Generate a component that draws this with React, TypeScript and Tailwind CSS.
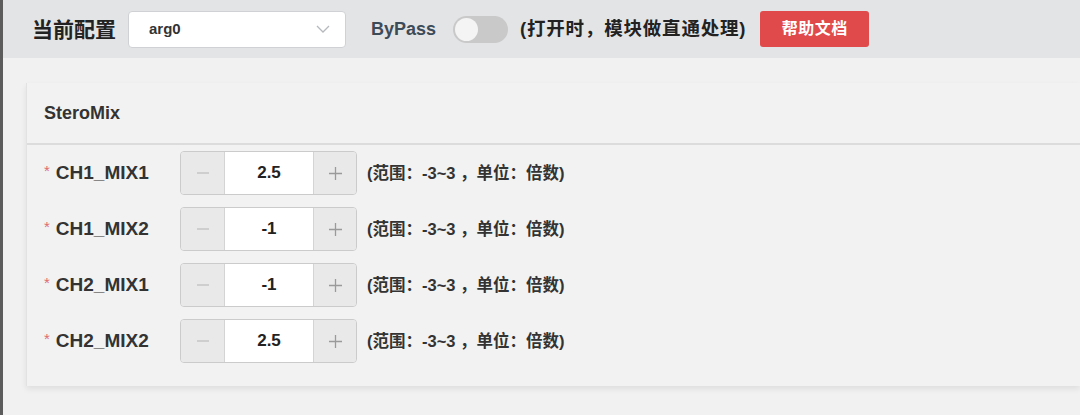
import React from "react";

const rows = [
  { name: "CH1_MIX1", value: "2.5" },
  { name: "CH1_MIX2", value: "-1" },
  { name: "CH2_MIX1", value: "-1" },
  { name: "CH2_MIX2", value: "2.5" },
];

export default function App() {
  return (
    <div
      className="flex w-[1080px] h-[415px] overflow-hidden bg-[#f1f1f1]"
      style={{ fontFamily: '"Liberation Sans", "Noto Sans CJK SC", sans-serif' }}
    >
      <div className="w-[3px] shrink-0 bg-[#5c5c5c]" />
      <div className="flex flex-col flex-1 min-w-0">
        <div className="h-[58px] shrink-0 bg-[#e3e4e6] flex items-center pl-[29px]">
          <span className="text-[21px] font-bold text-[#222] leading-none">当前配置</span>
          <div className="ml-[12px] w-[218px] h-[37px] bg-white border border-[#cfd1d4] rounded-[4px] flex items-center justify-between pl-[20px] pr-[15px]">
            <span className="text-[15px] font-bold text-[#333]">arg0</span>
            <svg width="14" height="8" viewBox="0 0 14 8" fill="none">
              <path d="M1 1 L7 7 L13 1" stroke="#b5b8bd" strokeWidth="1.3" />
            </svg>
          </div>
          <span className="ml-[25px] text-[18px] font-bold text-[#3d4a57]">ByPass</span>
          <div className="ml-[17px] w-[55px] h-[27px] rounded-full bg-[#c9c9c9] flex items-center pl-[2px]">
            <div className="w-[23px] h-[23px] rounded-full bg-[#f4f4f4]" />
          </div>
          <span className="ml-[12px] text-[18.5px] font-bold text-[#222] tracking-[0.8px]">(打开时，模块做直通处理)</span>
          <div className="ml-[14px] w-[109px] h-[36px] rounded-[3px] bg-[#e14a4a] flex items-center justify-center">
            <span className="text-[16px] font-bold text-white tracking-[0.5px]">帮助文档</span>
          </div>
        </div>
        <div className="flex-1 pl-[23px] pt-[25px]">
          <div className="h-[303px] bg-[#f2f2f2] border-l border-[#e2e2e2] shadow-[0_3px_6px_rgba(0,0,0,0.08)] flex flex-col">
            <div className="h-[62px] flex items-center pl-[17px] border-b-2 border-[#dcdcdc]">
              <span className="text-[18px] font-bold text-[#333]">SteroMix</span>
            </div>
            <div className="flex flex-col">
              {rows.map((r) => (
                <div key={r.name} className="h-[56px] flex items-center pl-[17px]">
                  <div className="w-[136px] flex items-center">
                    <span className="text-[#e06b6b] text-[15px] mr-[6px] self-start mt-[1px]">*</span>
                    <span className="text-[19px] font-bold text-[#333]">{r.name}</span>
                  </div>
                  <div className="w-[177px] h-[44px] flex border border-[#cbcbcb] rounded-[4px] overflow-hidden">
                    <div className="w-[44px] bg-[#e9e9e9] border-r border-[#d4d4d4] flex items-center justify-center">
                      <svg width="14" height="14" viewBox="0 0 14 14">
                        <path d="M1 7 H13" stroke="#c4c4c4" strokeWidth="1.3" />
                      </svg>
                    </div>
                    <div className="flex-1 bg-white flex items-center justify-center">
                      <span className="text-[17px] font-bold text-[#222]">{r.value}</span>
                    </div>
                    <div className="w-[43px] bg-[#e9e9e9] border-l border-[#d4d4d4] flex items-center justify-center">
                      <svg width="15" height="15" viewBox="0 0 15 15">
                        <path d="M1 7.5 H14 M7.5 1 V14" stroke="#9a9a9a" strokeWidth="1.3" />
                      </svg>
                    </div>
                  </div>
                  <span className="ml-[10px] text-[16.5px] font-bold text-[#333]">(范围：-3~3 ，单位：倍数)</span>
                </div>
              ))}
            </div>
          </div>
        </div>
      </div>
    </div>
  );
}
